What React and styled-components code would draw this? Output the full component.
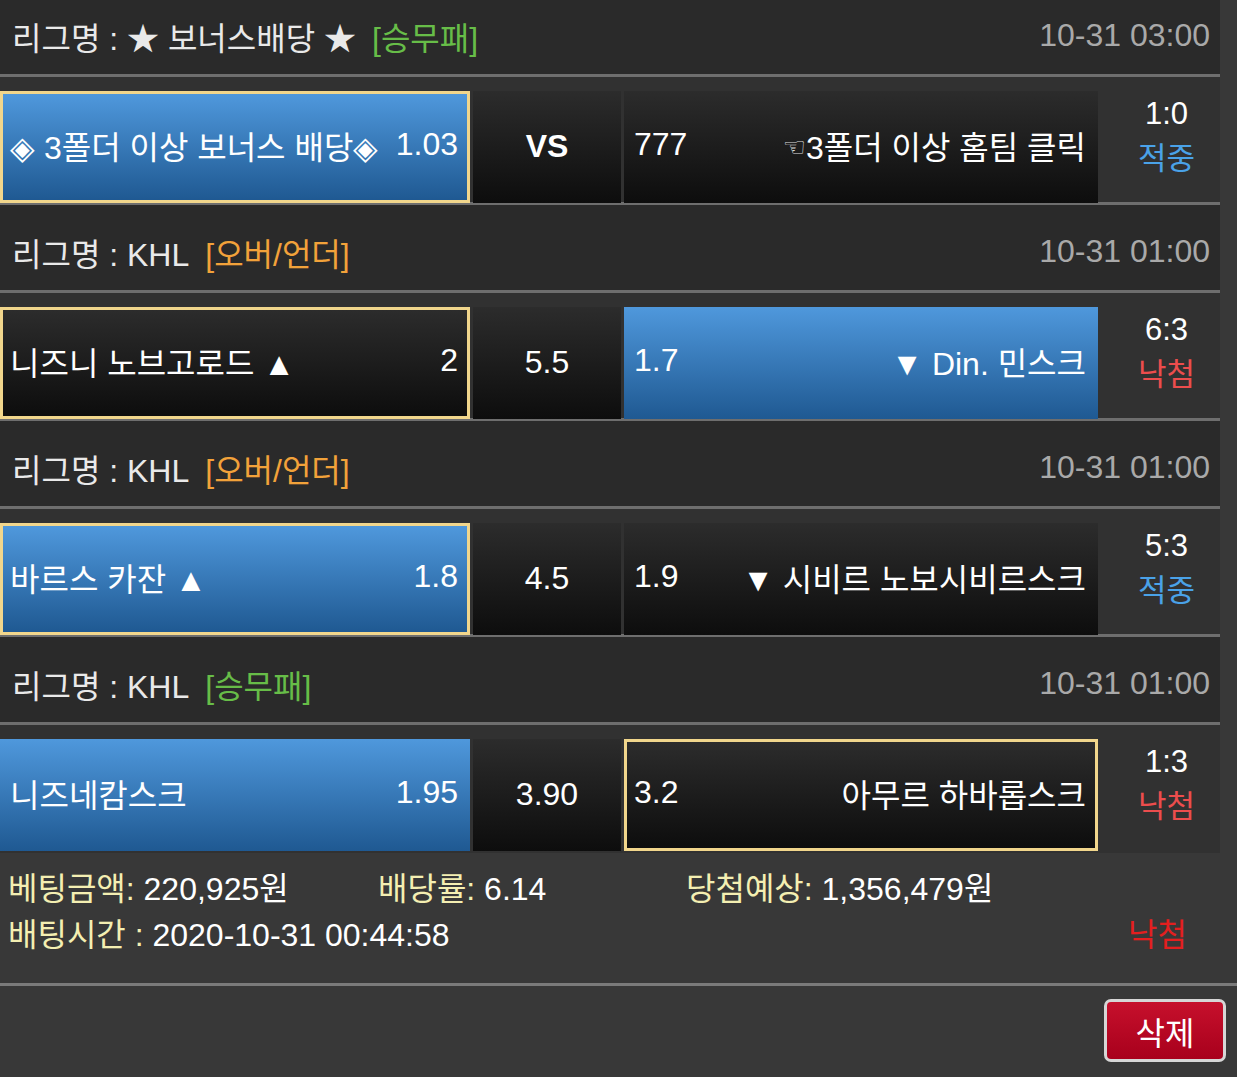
import React from 'react'
import styled, { createGlobalStyle } from 'styled-components'

const GlobalStyle = createGlobalStyle`
  html, body {
    margin: 0;
    padding: 0;
    background: #383838;
  }
  body {
    font-family: "Liberation Sans", "Noto Sans CJK KR", sans-serif;
    color: #fff;
    overflow: hidden;
  }
`

const TAG_COLORS = {
    '승무패': '#67bd48',
    '오버/언더': '#f2a23a',
}

const matches = [
    {
        league: '★ 보너스배당 ★',
        type: '승무패',
        time: '10-31 03:00',
        home: '◈ 3폴더 이상 보너스 배당◈',
        homeOdds: '1.03',
        mid: 'VS',
        awayOdds: '777',
        away: '3폴더 이상 홈팀 클릭',
        hand: true,
        win: 'home',
        pick: 'home',
        score: '1:0',
        result: '적중',
    },
    {
        league: 'KHL',
        type: '오버/언더',
        time: '10-31 01:00',
        home: '니즈니 노브고로드 ▲',
        homeOdds: '2',
        mid: '5.5',
        awayOdds: '1.7',
        away: '▼ Din. 민스크',
        win: 'away',
        pick: 'home',
        score: '6:3',
        result: '낙첨',
    },
    {
        league: 'KHL',
        type: '오버/언더',
        time: '10-31 01:00',
        home: '바르스 카잔 ▲',
        homeOdds: '1.8',
        mid: '4.5',
        awayOdds: '1.9',
        away: '▼ 시비르 노보시비르스크',
        win: 'home',
        pick: 'home',
        score: '5:3',
        result: '적중',
    },
    {
        league: 'KHL',
        type: '승무패',
        time: '10-31 01:00',
        home: '니즈네캄스크',
        homeOdds: '1.95',
        mid: '3.90',
        awayOdds: '3.2',
        away: '아무르 하바롭스크',
        win: 'home',
        pick: 'away',
        score: '1:3',
        result: '낙첨',
    },
]

export default function App() {
    return (
        <>
            <GlobalStyle />
            <Page>
                <List>
                    {matches.map((m, i) => (
                        <React.Fragment key={i}>
                            <League>
                                <LeagueName>
                                    리그명 : {m.league}
                                    <Tag $color={TAG_COLORS[m.type]}>[{m.type}]</Tag>
                                </LeagueName>
                                <Time>{m.time}</Time>
                            </League>
                            <Match $last={i === matches.length - 1}>
                                <Cell $win={m.win === 'home'} $picked={m.pick === 'home'}>
                                    <span>{m.home}</span>
                                    <span>{m.homeOdds}</span>
                                </Cell>
                                <MidCell $bold={m.mid === 'VS'}>{m.mid}</MidCell>
                                <Cell $win={m.win === 'away'} $picked={m.pick === 'away'}>
                                    <span>{m.awayOdds}</span>
                                    <span>{m.hand && <Hand>☜</Hand>}{m.away}</span>
                                </Cell>
                                <Result>
                                    <span>{m.score}</span>
                                    <Verdict $hit={m.result === '적중'}>{m.result}</Verdict>
                                </Result>
                            </Match>
                        </React.Fragment>
                    ))}
                </List>

                <Summary>
                    <Info><Label>베팅금액:</Label> 220,925원</Info>
                    <Info><Label>배당률:</Label> 6.14</Info>
                    <Info><Label>당첨예상:</Label> 1,356,479원</Info>
                    <Info $wide><Label>배팅시간 :</Label> 2020-10-31 00:44:58</Info>
                    <Lost>낙첨</Lost>
                </Summary>

                <Footer>
                    <DeleteButton>삭제</DeleteButton>
                </Footer>
            </Page>
        </>
    )
}

const Page = styled.div`
    width: 1237px;
    height: 1077px;
    overflow: hidden;
    font-size: 32px;
`

// the view is scrolled a little: the first league bar is cut at the top
const List = styled.div`
    width: 1220px;
    margin-top: -11px;
    background: #313131;
`

const League = styled.div`
    height: 88px;
    box-sizing: border-box;
    padding: 8px 10px 0 12px;
    display: flex;
    align-items: center;
    justify-content: space-between;
    background: #2a2a2a;
    border-bottom: 3px solid #6e6e6e;
`

const LeagueName = styled.div`
    color: #e9e9e9;
    white-space: nowrap;
`

const Tag = styled.span`
    margin-left: 16px;
    color: ${p => p.$color};
`

const Time = styled.div`
    color: #a9a9a9;
`

const Match = styled.div`
    height: 128px;
    box-sizing: border-box;
    padding: 14px 0 7px;
    display: grid;
    grid-template-columns: 470px 148px 474px 1fr;
    column-gap: 3px;
    background: #313131;
    border-bottom: 3px solid ${p => (p.$last ? '#313131' : '#6e6e6e')};
`

const Cell = styled.div`
    box-sizing: border-box;
    display: flex;
    align-items: center;
    justify-content: space-between;
    padding-bottom: 5px;
    white-space: nowrap;
    color: #fff;
    background: ${p => (p.$win
        ? 'linear-gradient(#4f98dc, #1f5992)'
        : 'linear-gradient(#2c2c2c, #0d0d0d)')};
    border: ${p => (p.$picked ? '3px solid #f1d68c' : 'none')};
    padding-left: ${p => (p.$picked ? '7px' : '10px')};
    padding-right: ${p => (p.$picked ? '9px' : '12px')};
`

const Hand = styled.span`
    font-family: "DejaVu Sans", sans-serif;
    font-size: 26px;
    vertical-align: 3px;
    color: #ddd;
`

const MidCell = styled.div`
    display: flex;
    align-items: center;
    justify-content: center;
    padding-bottom: 2px;
    background: linear-gradient(#2c2c2c, #0d0d0d);
    font-weight: ${p => (p.$bold ? 700 : 400)};
`

const Result = styled.div`
    display: flex;
    flex-direction: column;
    align-items: center;
    justify-content: center;
    padding: 0 0 22px 12px;
    line-height: 45px;
    font-size: 31px;
`

const Verdict = styled.span`
    color: ${p => (p.$hit ? '#4aa2e8' : '#ec4d4d')};
`

const Summary = styled.div`
    display: grid;
    grid-template-columns: 370px 308px 1fr;
    grid-auto-rows: 46px;
    align-items: center;
    padding: 10px 0 28px 8px;
    border-bottom: 3px solid #7a7a7a;
`

const Info = styled.div`
    white-space: nowrap;
    color: #fff;
    grid-column: ${p => (p.$wide ? 'span 2' : 'auto')};
`

const Label = styled.span`
    color: #f4efb2;
`

const Lost = styled.div`
    justify-self: end;
    margin-right: 50px;
    color: #e31f1f;
`

const Footer = styled.div`
    display: flex;
    justify-content: flex-end;
    padding: 13px 11px 0 0;
`

const DeleteButton = styled.button`
    width: 122px;
    height: 63px;
    box-sizing: border-box;
    border: 3px solid #d6d6d6;
    border-radius: 7px;
    background: linear-gradient(#c6102c, #a8001c);
    color: #fff;
    font-family: inherit;
    font-size: 32px;
    cursor: pointer;
`
